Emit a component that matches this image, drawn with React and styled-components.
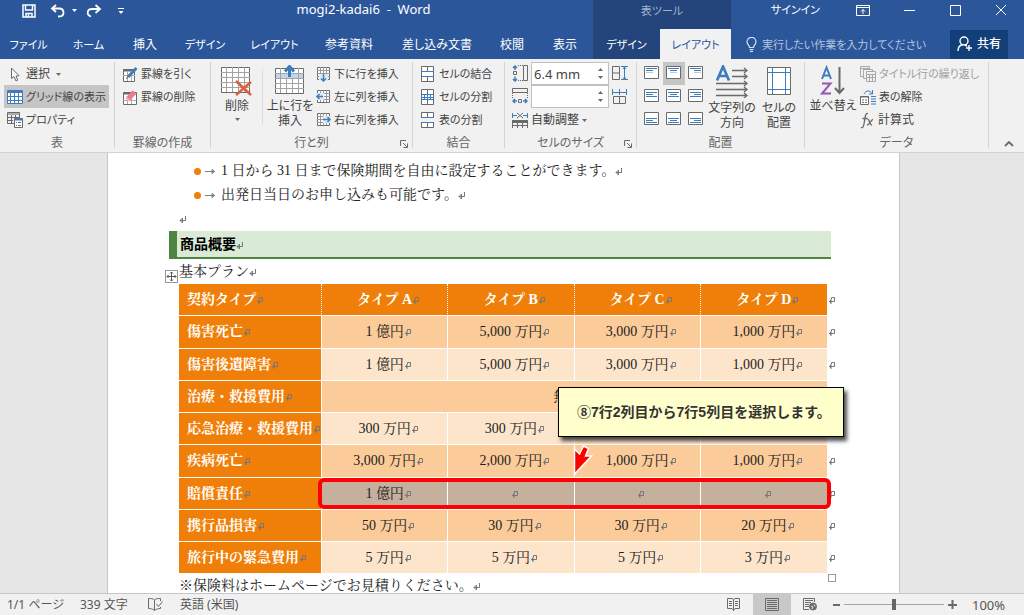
import React from "react";
import styled, { createGlobalStyle, css } from "styled-components";

const BLUE = "#2b579a";
const NAVY = "#23457c";
const INK = "#444444";
const LINE = "#3f7cbb";
const GREY = "#6a6a6a";

const Global = createGlobalStyle`
  * { box-sizing: border-box; }
  body { margin: 0; background: #e6e6e6; }
  body, button, input {
    font-family: "Noto Sans", "Noto Sans CJK JP", sans-serif;
    font-size: 12px;
    line-height: 16px;
    font-feature-settings: "palt";
  }
  button { border: 0; padding: 0; background: none; color: inherit; white-space: nowrap; }
  svg { display: block; flex: none; }
`;

const Shell = styled.div`
  display: flex;
  flex-direction: column;
  height: 100vh;
  overflow: hidden;
  color: ${INK};
`;

/* ---------- header ---------- */
const Header = styled.header`
  display: grid;
  grid-template-columns: 593px 138px 1fr;
  grid-template-rows: 29px 30px;
  flex: none;
  background: ${BLUE};
  color: #fff;
`;
const TitleLeft = styled.div`
  display: flex;
  align-items: center;
  padding: 0 0 8px 22px;
`;
const QuickTools = styled.div`
  display: flex;
  align-items: center;
  gap: 6px;
  width: 104px;
`;
const DocTitle = styled.h1`
  flex: 1;
  margin: 0;
  padding: 0 0 4px 8px;
  font-size: 13px;
  font-weight: 400;
  text-align: center;
  white-space: pre;
`;
const ToolsLabel = styled.div`
  display: flex;
  align-items: center;
  justify-content: center;
  padding-bottom: 8px;
  background: ${NAVY};
  color: #a2b4d0;
  font-size: 11px;
`;
const TitleRight = styled.div`
  display: flex;
  align-items: center;
  justify-content: flex-end;
  padding: 0 17px 9px 0;
`;
const SignIn = styled.button`
  font-size: 11px;
`;
const WindowButton = styled.button`
  display: flex;
  justify-content: center;
  width: ${(p) => p.$w || 46}px;
  margin-left: ${(p) => p.$gap || 0}px;
`;
const TabRow = styled.nav`
  display: flex;
  background: ${(p) => (p.$dark ? NAVY : "transparent")};
`;
const Tab = styled.button`
  width: ${(p) => p.$w}px;
  height: 30px;
  padding-top: 2px;
  font-size: ${(p) => (p.$kana ? 11 : 12)}px;
  ${(p) => p.$active && css`background: #f1f1f1; color: ${BLUE};`}
`;
const TellRow = styled.div`
  display: flex;
  align-items: center;
  padding: 0 16px 0 15px;
`;
const TellMe = styled.label`
  display: flex;
  align-items: center;
  gap: 5px;
  flex: 1;
  input {
    flex: 1;
    min-width: 0;
    height: 20px;
    border: 0;
    padding: 0;
    background: none;
    font-size: 11px;
    outline: none;
  }
  input::placeholder { color: #b4c4df; opacity: 1; }
`;
const Share = styled.button`
  display: flex;
  align-items: center;
  justify-content: center;
  gap: 4px;
  width: 58px;
  height: 29px;
  background: #123f78;
  font-weight: 500;
`;

/* ---------- ribbon ---------- */
const Ribbon = styled.div`
  display: flex;
  flex: none;
  height: 94px;
  padding-top: 3px;
  background: #f1f1f1;
  border-bottom: 1px solid #d2d2d2;
`;
const GroupBox = styled.section`
  position: relative;
  display: flex;
  flex-direction: column;
  width: ${(p) => p.$w}px;
  flex: none;
  margin-bottom: 4px;
  border-right: 1px solid #d4d4d4;
`;
const GroupBody = styled.div`
  display: flex;
  flex: none;
  height: 69px;
  padding-left: ${(p) => p.$pad}px;
`;
const GroupLabel = styled.h2`
  flex: none;
  margin: 4px 0 0;
  font-size: 12px;
  font-weight: 400;
  color: #666;
  text-align: center;
`;
const Launcher = styled.button`
  position: absolute;
  right: 4px;
  bottom: 0;
`;
const Stack = styled.div`
  display: flex;
  flex-direction: column;
  margin-left: ${(p) => p.$ml || 0}px;
`;
const SmallButton = styled.button`
  display: flex;
  align-items: center;
  gap: ${(p) => p.$gap || 4}px;
  height: 23px;
  padding: 1px ${(p) => p.$px || 0}px 0;
  font-size: ${(p) => (p.$kana ? 11 : 12)}px;
  background: ${(p) => (p.$on ? "#c5c5c5" : "transparent")};
  color: ${(p) => (p.disabled ? "#a0a0a0" : INK)};
`;
const BigButton = styled.button`
  display: flex;
  flex-direction: column;
  align-items: center;
  width: ${(p) => p.$w}px;
  height: 69px;
  padding-top: 3px;
  line-height: 15px;
  color: ${INK};
  span { margin: 2px 0 5px; }
`;
const Divider = styled.div`
  width: 1px;
  height: 55px;
  margin: 7px 8px 0 7px;
  background: #dcdcdc;
`;
const SizeRow = styled.div`
  display: flex;
  align-items: center;
  gap: 3px;
  height: 23px;
`;
const SpinField = styled.div`
  display: flex;
  width: 78px;
  height: 23px;
  background: #fff;
  border: 1px solid #c0c0c0;
  input {
    width: 60px;
    border: 0;
    padding: 0 2px;
    background: none;
    font-size: 13px;
    color: ${INK};
    outline: none;
  }
`;
const Steppers = styled.div`
  display: flex;
  flex-direction: column;
  justify-content: space-evenly;
  width: 16px;
  button { display: flex; justify-content: center; }
`;
const AlignGrid = styled.div`
  display: grid;
  grid-template-columns: repeat(3, 22px);
  grid-auto-rows: 23px;
`;
const AlignButton = styled.button`
  display: flex;
  align-items: flex-start;
  justify-content: center;
  padding: 4px 1px 0 0;
  background: ${(p) => (p.$on ? "#c5c5c5" : "transparent")};
`;
const RibbonEnd = styled.div`
  display: flex;
  flex: 1;
  align-items: flex-end;
  justify-content: flex-end;
  padding: 0 10px 5px 0;
`;

/* ---------- document ---------- */
const Canvas = styled.main`
  flex: 1;
  min-height: 0;
  padding-right: 17px;
  overflow: hidden;
`;
const Page = styled.article`
  position: relative;
  width: 793px;
  min-height: 100%;
  margin: 0 auto;
  padding: 6px 68px 0 71px;
  background: #fff;
  border: solid #c6c6c6;
  border-width: 0 1px;
  font-family: "Liberation Serif", "Noto Serif CJK JP", "Noto Sans CJK JP", serif;
  font-size: 14px;
  line-height: 24px;
  font-feature-settings: normal;
  color: #222;
`;
const Bullets = styled.ul`
  margin: 0;
  padding: 0 0 0 15px;
  list-style: none;
`;
const Bullet = styled.li`
  display: flex;
  align-items: center;
  height: 24px;
  white-space: nowrap;
  &::before {
    content: "";
    width: 7px;
    height: 7px;
    margin-right: 4px;
    border-radius: 50%;
    background: #f07f09;
  }
  span { padding-left: 6px; }
`;
const Para = styled.p`
  margin: 0;
  height: 24px;
  white-space: nowrap;
`;
const Heading = styled.h3`
  margin: 0 0 1px -10px;
  height: 28px;
  padding-left: 3px;
  background: #d9ead5;
  border-left: 8px solid #4e8542;
  border-bottom: 2px solid #4e8542;
  font-family: "Liberation Sans", "Noto Sans CJK JP", sans-serif;
  font-size: 14px;
  line-height: 27px;
  color: #000;
`;
const TableArea = styled.div`
  position: relative;
  width: 660px;
`;
const PlanTable = styled.table`
  width: 660px;
  table-layout: fixed;
  border-collapse: separate;
  border-spacing: 0;
  td, th {
    height: 32px;
    padding: 0;
    border-bottom: 1px solid #fff;
    line-height: 24px;
    text-align: center;
    white-space: nowrap;
  }
  tbody tr:nth-child(4n + 1) > * { height: 33px; }
  tr > td:last-child { padding-left: 1px; text-align: left; }
`;
const HeadCell = styled.th`
  background: #f07f09;
  color: #fff;
  border-right: ${(p) => (p.$last ? "0" : "1px dotted #fff")};
`;
const RowHead = styled.th`
  && { padding-left: 8px; text-align: left; }
  background: #f07f09;
  color: #fff;
  border-right: ${(p) => (p.$dotted ? "1px dotted #fff" : "1px solid #fff")};
`;
const Cell = styled.td`
  background: ${(p) => (p.$picked ? "#c4b09c" : p.$odd ? "#fbcb99" : "#fde5cc")};
  border-right: ${(p) => (p.$last ? "0" : "1px solid #fff")};
`;
const MarkSvg = styled.svg`
  display: inline-block;
  margin: 0 -8px 0 0;
  vertical-align: -1px;
`;
const MoveHandle = styled.button`
  position: absolute;
  left: -14px;
  top: -14px;
  display: flex;
  align-items: center;
  justify-content: center;
  width: 13px;
  height: 13px;
  background: #fff;
  border: 1px solid #999;
`;
const ResizeHandle = styled.div`
  position: absolute;
  left: 649px;
  bottom: -8px;
  width: 8px;
  height: 8px;
  border: 1px solid #999;
`;
const RedFrame = styled.div`
  position: absolute;
  left: 139px;
  top: 194px;
  width: 513px;
  height: 31px;
  border: 4px solid #fe0000;
  border-radius: 6px;
`;
const Callout = styled.div`
  position: absolute;
  left: 379px;
  top: 103px;
  display: flex;
  align-items: center;
  width: 286px;
  height: 50px;
  padding-left: 18px;
  background: #ffffcc;
  border: 1px solid #000;
  box-shadow: 3px 4px 4px rgba(0, 0, 0, 0.7);
  font-family: "Liberation Sans", "Noto Sans CJK JP", sans-serif;
  font-size: 14px;
  font-weight: 700;
  white-space: nowrap;
  color: #333;
`;
const Pointer = styled.svg`
  position: absolute;
  left: 394px;
  top: 161px;
`;

/* ---------- status bar ---------- */
const Status = styled.footer`
  display: flex;
  align-items: center;
  flex: none;
  height: 22px;
  padding: 0 18px 0 7px;
  background: #f1f1f1;
  border-top: 1px solid #c6c6c6;
  color: #555;
`;
const StatusItem = styled.button`
  text-align: left;
  width: ${(p) => p.$w}px;
`;
const Views = styled.div`
  display: flex;
  margin: 0 4px 0 auto;
`;
const ViewButton = styled.button`
  display: flex;
  align-items: center;
  justify-content: center;
  width: 38px;
  height: 21px;
  background: ${(p) => (p.$on ? "#c8c8c8" : "transparent")};
`;
const Zoom = styled.input`
  appearance: none;
  width: 100px;
  height: 12px;
  margin: 0 4px;
  background: linear-gradient(#a6a6a6, #a6a6a6) center / 100% 1px no-repeat;
  &::-webkit-slider-thumb {
    appearance: none;
    width: 4px;
    height: 11px;
    background: #666;
  }
`;
const ZoomValue = styled.output`
  width: 34px;
  margin-left: 15px;
  font-size: 13px;
`;

/* ---------- icons ---------- */
const Svg = ({ w = 16, h = 16, sw = 1, c = GREY, children }) => (
  <svg width={w} height={h} viewBox={`0 0 ${w} ${h}`} fill="none" stroke={c} strokeWidth={sw} aria-hidden="true">
    {children}
  </svg>
);
const Caret = ({ c = GREY }) => (
  <Svg w={5} h={3}><path d="M0 0h5L2.500 3z" fill={c} stroke="none" /></Svg>
);
const SaveIcon = () => (
  <Svg w={14} h={14} c="#fff" sw={1.5}><path d="M1 1h12v12H1zM3.500 1v5h7V1M4 13V9.500h6V13M6.500 10.500v2" /></Svg>
);
const UndoIcon = () => (
  <Svg w={16} h={14} c="#fff" sw={1.8}><path d="M6 1L2 4.500L6 8M2.500 4.500H9c6 0 6 8 0 8H8" /></Svg>
);
const RedoIcon = () => (
  <Svg w={16} h={14} c="#fff" sw={1.8}><path d="M9.500 1l4.500 4l-4.500 4M13.500 5H6C1 5 0 11 5 12.500" /></Svg>
);
const MoreIcon = () => (
  <Svg w={6} h={6} c="#fff"><path d="M0 .5h6" /><path d="M.5 3h5L3 6z" fill="#fff" stroke="none" /></Svg>
);
const BulbIcon = () => (
  <Svg w={11} h={15} c="#d5dff0" sw={1.2}><path d="M3.500 10.500C3.500 8 1 7.500 1 4.800a4.300 4.300 0 0 1 9 0c0 2.700-2.500 3.200-2.500 5.700zM3.500 12.500h4M4 14.400h3" /></Svg>
);
const PersonIcon = () => (
  <Svg w={16} h={16} c="#fff" sw={1.4}><circle cx="7" cy="5" r="4" /><path d="M1 15c0-4 2-6 5-6.500M8 9l2 1M12 9v6M9 12h6" /></Svg>
);
const CursorIcon = () => (
  <Svg w={10} h={15}><path d="M1.500 1v10.500l2.500-2l2 4.500l1.700-.8L6 9l3-.3z" fill="#fff" /></Svg>
);
const GridlinesIcon = () => (
  <Svg w={16} h={14} c={LINE}><path d="M.5.500h15v13H.5z" fill="#fff" /><path d="M0 2h16" strokeWidth="2" /><path d="M3.500 0v14M7.500 3v11M11.500 3v11M0 6.500h16M0 10.500h16" /></Svg>
);
const PropertiesIcon = () => (
  <Svg w={16} h={16}><path d="M.5.500h12v11H.5zM0 2h13M4.500 3v9M8.500 3v3M0 5.500h12M0 8.500h6" /><path d="M7.500 6.500h8v9h-8z" fill="#fff" /><path d="M7 7.500h9" stroke={LINE} strokeWidth="2" /><path d="M9 10.500h1M11 10.500h3M9 13.500h1M11 13.500h3" /></Svg>
);
const DrawIcon = () => (
  <Svg w={16} h={15}><path d="M1.500 2.500h11v12h-11z" fill="#fff" /><path d="M1 3.500h12" strokeWidth="2" /><path d="M5.500 4v10M9.500 5v9M1 8.500h12" stroke="#aaa" /><path d="M6 10L14.500 1" stroke={LINE} strokeWidth="3" /><path d="M4.500 12l1-2.500" /></Svg>
);
const EraseIcon = () => (
  <Svg w={16} h={15}><path d="M1.500 2.500h13v12h-13z" fill="#fff" /><path d="M1 3.500h8" strokeWidth="2" /><path d="M5.500 10v4M9.500 9v5M1 10.500h13" stroke="#aaa" /><path d="M6 9L12.500 2" stroke="#ea7d8c" strokeWidth="5" /><path d="M4 8l4 3" stroke="#f5b5bd" strokeWidth="2" /></Svg>
);
const DeleteIcon = () => (
  <Svg w={32} h={31}><path d="M.5 2.500h28v25H.5z" fill="#fff" /><path d="M0 7.500h29M0 12.500h29M0 17.500h29M0 22.500h29M5.500 2v25M11.500 2v25M17.500 2v25M23.500 2v25" stroke="#a3a3a3" /><path d="M15 16L30 30M30 17L15 30" stroke="#d9603f" strokeWidth="2.500" /></Svg>
);
const InsertAboveIcon = () => (
  <Svg w={30} h={31}><path d="M.5 3.500h28v25H.5z" fill="#fff" /><path d="M1 8h27v5H1z" fill="#c3d5e8" stroke="none" /><path d="M0 8.500h29M0 13.500h29M0 18.500h29M0 23.500h29M5.500 3v25M11.500 13v15M17.500 13v15M23.500 3v25" stroke="#a3a3a3" /><path d="M14.500 12V3M10 6.500l4.500-5l4.500 5" stroke={LINE} strokeWidth="3" /></Svg>
);
const InsertIcon = ({ dir }) => (
  <Svg w={15} h={15}>
    <path d="M1.500.500h12v12h-12z" fill="#fff" />
    <path d="M4.500 0v12M7.500 0v12M10.500 0v12M1 3.500h13M1 6.500h13M1 9.500h13" stroke="#999" />
    {dir === "down" && <g><path d="M3 7h9v7H3z" fill="#dfe8f2" stroke="none" /><path d="M7.500 7v7M5 11.500L7.500 14L10 11.500" stroke={LINE} strokeWidth="1.500" /></g>}
    {dir === "left" && <g><path d="M0 3h8v7H0z" fill="#dfe8f2" stroke="none" /><path d="M7 6.500H1M3.500 4L1 6.500L3.500 9" stroke={LINE} strokeWidth="1.500" /></g>}
    {dir === "right" && <g><path d="M7 3h8v7H7z" fill="#dfe8f2" stroke="none" /><path d="M7 6.500h7M11.500 4L14 6.500L11.500 9" stroke={LINE} strokeWidth="1.500" /></g>}
  </Svg>
);
const MergeIcon = () => (
  <Svg w={14} h={16}><path d="M.5.500h12v15H.500zM6.500 0v5M6.500 11v5" fill="#fff" /><path d="M0 5.500h13M0 10.500h13" stroke={LINE} /></Svg>
);
const SplitCellsIcon = () => (
  <Svg w={14} h={16}><path d="M.5.500h12v15H.500zM6.500 0v5M6.500 11v5" fill="#fff" /><path d="M0 5.500h13M0 10.500h13M3.500 5v6M6.500 5v6M9.500 5v6M0 8.500h13" stroke={LINE} /></Svg>
);
const SplitTableIcon = () => (
  <Svg w={14} h={16}><path d="M.5 5V.500h12V5M6.500 0v5M.5 11v4.500h12V11M6.500 11v5" fill="#fff" /><path d="M0 5.500h13M0 10.500h13" stroke={LINE} /></Svg>
);
const HeightIcon = () => (
  <Svg w={16} h={17}><path d="M11.500.500h4v15h-4zM1.500 6.500h3v3h-3z" /><path d="M6 .5h5M6 15.500h5" strokeDasharray="1 1" /><path d="M3 5V1M1 3l2-2l2 2M3 11.500v4M1 14l2 2l2-2" stroke={LINE} strokeWidth="1.500" /></Svg>
);
const WidthIcon = () => (
  <Svg w={16} h={17}><path d="M.5.500h15v4H.500zM6.500 11.500h3v3h-3z" /><path d="M.5 5v6M15.500 5v6" strokeDasharray="1 1" /><path d="M5 13H1M3 11l-2 2l2 2M11 13h4M13 11l2 2l-2 2" stroke={LINE} strokeWidth="1.500" /></Svg>
);
const AutoFitIcon = () => (
  <Svg w={16} h={16}><path d="M5 1l6 5M11 1L5 6" /><path d="M.5 1v5M15.500 1v5M1 3.500h4M11 3.500h4" stroke={LINE} /><path d="M0 9.500h16" strokeWidth="3" /><path d="M.5 9v7M5.500 9v7M10.500 9v7M15.500 9v7M0 13.500h16" /></Svg>
);
const EqualRowsIcon = () => (
  <Svg w={16} h={15}><path d="M.5.500h7v13h-7zM0 7h8" /><path d="M9 .5h7M9 13.500h7M12.500 1v13M11 3l1.500-2L14 3M11 11.500l1.500 2l1.500-2" stroke={LINE} /></Svg>
);
const EqualColsIcon = () => (
  <Svg w={15} h={16}><path d="M1.500 7.500h12v7h-12zM7.500 8v7" /><path d="M.5 0v6M7.500 0v6M14.500 0v6M0 3.500h15" stroke={LINE} /></Svg>
);
const AlignIcon = ({ row, col }) => {
  const y = [2.5, 3.5, 6.5][row];
  const x = (len) => [2, 7 - len / 2 + 0.5, 13 - len][col];
  return (
    <Svg w={15} h={13}>
      <path d="M.5.500h14v12H.500z" fill="#fff" />
      <g stroke={LINE}>
        <path d={`M${x(11)} ${y}h11`} />
        <path d={`M${x(7)} ${y + 2}h7`} />
        <path d={row === 0 ? `M${x(7)} ${y + 4}h7` : `M${x(11)} ${y + 4}h11`} opacity={row === 0 ? 0.4 : 1} />
      </g>
    </Svg>
  );
};
const DirectionIcon = () => (
  <Svg w={33} h={33}><path d="M1 15.500L7 1.500L13 15.500M3.500 11h7" stroke={LINE} strokeWidth="2.700" /><path d="M16 5.500h15M16 11.500h15M0 18.500h31M0 24.500h31M0 30.500h31M28 3l3 2.500L28 8M28 9l3 2.500L28 14M28 16l3 2.500L28 21M28 22l3 2.500L28 27M28 28l3 2.500L28 33" strokeWidth="1.300" /></Svg>
);
const MarginsIcon = () => (
  <Svg w={24} h={33}><path d="M.5 2.500h23v27H.500z" fill="#fff" /><path d="M5.500 3v26M18.500 3v26M1 7.500h22M1 24.500h22" stroke={LINE} /></Svg>
);
const SortIcon = () => (
  <Svg w={26} h={31}><path d="M2 14L6.500 2.500L11 14M3.500 10.500h6" stroke={LINE} strokeWidth="2" /><path d="M2 18.500h8.500L2 28.500h9" stroke="#9558b2" strokeWidth="2" /><path d="M19.500 2v26M15 23l4.500 5l4.500-5" strokeWidth="2" /></Svg>
);
const RepeatIcon = () => (
  <Svg w={16} h={16} c="#a8a8a8"><path d="M.5.500h9v10h-9zM0 2.500h9M3.500 3v8" /><path d="M3.500 3.500h9v9h-9z" fill="#f1f1f1" /><path d="M6.500 5.500h9v10h-9zM6 8.500h9M9.500 8v7M12.500 8v7M6 11.500h9" fill="#f1f1f1" /></Svg>
);
const ConvertIcon = () => (
  <Svg w={16} h={15}><path d="M.5 6.500h8v8h-8zM0 7h9" fill="#fff" /><path d="M2 10h2M5 10h2M2 12.500h2M5 12.500h2" /><path d="M4 4C6 0 10 0 12 3.500M12.500 0v4H9M11 6.500h5M11 9h5M11 11.500h5M11 14h5" stroke={LINE} /></Svg>
);
const FormulaIcon = () => (
  <Svg w={14} h={17}><path d="M1 15.500c2.500 1 3-3 3.500-6.500S5.500.500 8 1.500M2.500 6.500h5M7.500 7.500c2-1 2 6 4.500 5.500M13 7.500c-2 0-3.500 5.500-6 5.500" strokeWidth="1.300" /></Svg>
);
const LauncherIcon = () => (
  <Svg w={8} h={8}><path d="M.5 6V.500H6M3 3l4 4M7.500 3.500v4h-4" /></Svg>
);
const ArrowMark = () => (
  <Svg w={10} h={6} c="#7f7f7f"><path d="M0 3.500h9M7 1.500l2.500 2L7 5.500z" fill="#7f7f7f" /></Svg>
);
const ReturnMark = () => (
  <MarkSvg width="8" height="8" viewBox="0 0 8 8" fill="none" stroke="#777" aria-hidden="true">
    <path d="M6.500 0v4.500H1M3.500 2v5L1 4.500z" fill="none" />
  </MarkSvg>
);
const CellMark = () => (
  <MarkSvg width="8" height="8" viewBox="0 0 8 8" fill="none" stroke="#777" aria-hidden="true">
    <path d="M3.500 2V.500h3v4H1M2.500 3v3M3 2v5M1.500 4v1" />
  </MarkSvg>
);

/* ---------- pieces ---------- */
const Group = ({ w, label, pad, launcher, children }) => (
  <GroupBox $w={w}>
    <GroupBody $pad={pad}>{children}</GroupBody>
    <GroupLabel>{label}</GroupLabel>
    {launcher && <Launcher aria-label={`${label}の詳細`}><LauncherIcon /></Launcher>}
  </GroupBox>
);
const Spin = ({ label, value }) => (
  <SpinField>
    <input aria-label={label} defaultValue={value} />
    <Steppers>
      <button aria-label={`${label}を増やす`}><Svg w={5} h={3}><path d="M0 3h5L2.500 0z" fill={GREY} stroke="none" /></Svg></button>
      <button aria-label={`${label}を減らす`}><Caret /></button>
    </Steppers>
  </SpinField>
);

const tabs = [
  ["ファイル", 57, 1], ["ホーム", 63, 1], ["挿入", 50], ["デザイン", 70, 1], ["レイアウト", 69, 1],
  ["参考資料", 80], ["差し込み文書", 96], ["校閲", 54], ["表示", 52],
];
const rows = [
  ["傷害死亡", "1 億円", "5,000 万円", "3,000 万円", "1,000 万円"],
  ["傷害後遺障害", "1 億円", "5,000 万円", "3,000 万円", "1,000 万円"],
  ["治療・救援費用", "無制限"],
  ["応急治療・救援費用", "300 万円", "300 万円", "300 万円", "300 万円"],
  ["疾病死亡", "3,000 万円", "2,000 万円", "1,000 万円", "1,000 万円"],
  ["賠償責任", "1 億円", "", "", ""],
  ["携行品損害", "50 万円", "30 万円", "30 万円", "20 万円"],
  ["旅行中の緊急費用", "5 万円", "5 万円", "5 万円", "3 万円"],
];
const SELECTED_ROW = 5;

export default function App() {
  return (
    <Shell>
      <Global />
      <Header>
        <TitleLeft>
          <QuickTools>
            <button aria-label="保存"><SaveIcon /></button>
            <WindowButton aria-label="元に戻す" $w={16} $gap={8}><UndoIcon /></WindowButton>
            <Caret c="#fff" />
            <WindowButton aria-label="やり直し" $w={16} $gap={3}><RedoIcon /></WindowButton>
            <WindowButton aria-label="カスタマイズ" $w={6} $gap={10}><MoreIcon /></WindowButton>
          </QuickTools>
          <DocTitle>{"mogi2-kadai6  -  Word"}</DocTitle>
        </TitleLeft>
        <ToolsLabel>表ツール</ToolsLabel>
        <TitleRight>
          <SignIn>サインイン</SignIn>
          <WindowButton $gap={20} aria-label="リボンの表示オプション">
            <Svg w={14} h={11} c="#fff"><path d="M.5.500h13v10H.500zM0 2.500h14M7 9V4.500M5 6.500L7 4.500L9 6.500" /></Svg>
          </WindowButton>
          <WindowButton aria-label="最小化"><Svg w={11} h={11} c="#fff"><path d="M0 5.500h11" /></Svg></WindowButton>
          <WindowButton aria-label="最大化"><Svg w={11} h={11} c="#fff"><path d="M.5.500h10v10H.500z" /></Svg></WindowButton>
          <WindowButton aria-label="閉じる" $w={12} $gap={17}><Svg w={12} h={12} c="#fff"><path d="M1 1l10 10M11 1L1 11" /></Svg></WindowButton>
        </TitleRight>
        <TabRow>
          {tabs.map(([name, w, kana]) => <Tab key={name} $w={w} $kana={kana}>{name}</Tab>)}
        </TabRow>
        <TabRow $dark>
          <Tab $w={67} $kana>デザイン</Tab>
          <Tab $w={71} $kana $active>レイアウト</Tab>
        </TabRow>
        <TellRow>
          <TellMe><BulbIcon /><input aria-label="操作アシスト" placeholder="実行したい作業を入力してください" /></TellMe>
          <Share><PersonIcon />共有</Share>
        </TellRow>
      </Header>

      <Ribbon>
        <Group w={115} label="表" pad={4}>
          <Stack>
            <SmallButton $px={6} $gap={6}><CursorIcon />選択<Caret /></SmallButton>
            <SmallButton $px={3} $gap={3} $on $kana><GridlinesIcon />グリッド線の表示</SmallButton>
            <SmallButton $px={3} $gap={3} $kana><PropertiesIcon />プロパティ</SmallButton>
          </Stack>
        </Group>
        <Group w={96} label="罫線の作成" pad={7}>
          <Stack>
            <SmallButton $gap={3} $kana><DrawIcon />罫線を引く</SmallButton>
            <SmallButton $gap={3} $kana><EraseIcon />罫線の削除</SmallButton>
          </Stack>
        </Group>
        <Group w={202} label="行と列" pad={8} launcher>
          <BigButton $w={36}><DeleteIcon /><span>削除</span><Caret /></BigButton>
          <Divider />
          <BigButton $w={38}><InsertAboveIcon /><span>上に行を<br />挿入</span></BigButton>
          <Stack $ml={7}>
            <SmallButton $gap={3} $kana><InsertIcon dir="down" />下に行を挿入</SmallButton>
            <SmallButton $gap={3} $kana><InsertIcon dir="left" />左に列を挿入</SmallButton>
            <SmallButton $gap={3} $kana><InsertIcon dir="right" />右に列を挿入</SmallButton>
          </Stack>
        </Group>
        <Group w={92} label="結合" pad={8}>
          <Stack>
            <SmallButton $kana><MergeIcon />セルの結合</SmallButton>
            <SmallButton $kana><SplitCellsIcon />セルの分割</SmallButton>
            <SmallButton $kana><SplitTableIcon />表の分割</SmallButton>
          </Stack>
        </Group>
        <Group w={132} label="セルのサイズ" pad={7} launcher>
          <Stack>
            <SizeRow><HeightIcon /><Spin label="高さ" value="6.4 mm" /><button aria-label="高さを揃える"><EqualRowsIcon /></button></SizeRow>
            <SizeRow><WidthIcon /><Spin label="幅" value="" /><button aria-label="幅を揃える"><EqualColsIcon /></button></SizeRow>
            <SmallButton $gap={3}><AutoFitIcon />自動調整<Caret /></SmallButton>
          </Stack>
        </Group>
        <Group w={168} label="配置" pad={4}>
          <AlignGrid>
            {[0, 1, 2].map((r) => [0, 1, 2].map((c) => (
              <AlignButton key={`${r}${c}`} $on={r === 0 && c === 1} aria-label={`配置 ${r + 1}-${c + 1}`}>
                <AlignIcon row={r} col={c} />
              </AlignButton>
            )))}
          </AlignGrid>
          <BigButton $w={50}><DirectionIcon /><span>文字列の<br />方向</span></BigButton>
          <BigButton $w={44}><MarginsIcon /><span>セルの<br />配置</span></BigButton>
        </Group>
        <Group w={184} label="データ" pad={4}>
          <BigButton $w={48}><SortIcon /><span>並べ替え</span></BigButton>
          <Stack $ml={3}>
            <SmallButton $gap={3} $kana disabled><RepeatIcon />タイトル行の繰り返し</SmallButton>
            <SmallButton $gap={3} $kana><ConvertIcon />表の解除</SmallButton>
            <SmallButton $gap={4}><FormulaIcon />計算式</SmallButton>
          </Stack>
        </Group>
        <RibbonEnd>
          <button aria-label="リボンを折りたたむ"><Svg w={10} h={6} sw={1.8}><path d="M1 5l4-4l4 4" /></Svg></button>
        </RibbonEnd>
      </Ribbon>

      <Canvas>
        <Page>
          <Bullets>
            <Bullet><ArrowMark /><span>1 日から 31 日まで保険期間を自由に設定することができます。<ReturnMark /></span></Bullet>
            <Bullet><ArrowMark /><span>出発日当日のお申し込みも可能です。<ReturnMark /></span></Bullet>
          </Bullets>
          <Para><ReturnMark /></Para>
          <Heading>商品概要<ReturnMark /></Heading>
          <Para>基本プラン<ReturnMark /></Para>
          <TableArea>
            <PlanTable>
              <colgroup>
                <col style={{ width: 143 }} />
                <col /><col /><col /><col />
                <col style={{ width: 12 }} />
              </colgroup>
              <thead>
                <tr>
                  <RowHead scope="col" $dotted>契約タイプ<CellMark /></RowHead>
                  {["A", "B", "C", "D"].map((t) => (
                    <HeadCell key={t} scope="col" $last={t === "D"}>タイプ {t}<CellMark /></HeadCell>
                  ))}
                  <td><CellMark /></td>
                </tr>
              </thead>
              <tbody>
                {rows.map(([name, ...vals], i) => (
                  <tr key={name}>
                    <RowHead scope="row">{name}<CellMark /></RowHead>
                    {vals.map((v, j) => (
                      <Cell
                        key={j}
                        colSpan={vals.length === 1 ? 4 : 1}
                        $odd={i % 2 === 0}
                        $picked={i === SELECTED_ROW}
                        $last={j === vals.length - 1}
                      >
                        {v}<CellMark />
                      </Cell>
                    ))}
                    <td><CellMark /></td>
                  </tr>
                ))}
              </tbody>
            </PlanTable>
            <MoveHandle aria-label="表の移動">
              <Svg w={11} h={11} c="#555"><path d="M5.500 1v9M1 5.500h9M4 2.500L5.500 1L7 2.500M4 8.500L5.500 10L7 8.500M2.500 4L1 5.500L2.500 7M8.500 4L10 5.500L8.500 7" /></Svg>
            </MoveHandle>
            <ResizeHandle />
            <RedFrame />
            <Callout>⑧7行2列目から7行5列目を選択します。</Callout>
            <Pointer width="21" height="32" viewBox="0 0 21 32" aria-hidden="true">
              <path d="M1.500 29V4l5 5l4-8l5 2.500l-3 7.500h6z" fill="#fe0000" stroke="#fff" strokeWidth="1.500" />
            </Pointer>
          </TableArea>
          <Para>※保険料はホームページでお見積りください。<ReturnMark /></Para>
        </Page>
      </Canvas>

      <Status>
        <StatusItem $w={73}>1/1 ページ</StatusItem>
        <StatusItem $w={68}>339 文字</StatusItem>
        <StatusItem $w={32} aria-label="校正">
          <Svg w={15} h={13}><path d="M6.500 2v10.500M6.500 2C5 .5 3 .5.500.500v10c2.500 0 4.500.500 6 2M6.500 2C8 .5 10 .5 12.500.500V3M6.500 12.500c1.500-1.500 4-2 6-2V9M8.500 6l2 2.500l4-5" /></Svg>
        </StatusItem>
        <StatusItem $w={80}>英語 (米国)</StatusItem>
        <Views>
          <ViewButton aria-label="閲覧モード">
            <Svg w={14} h={13}><path d="M6.500 1.500v11M6.500 1.500L5 .5H.500v10H5l1.500 2l1.500-2h4.500V.500H8zM2 3.500h3M2 5.500h3M2 7.500h3M8 3.500h3M8 5.500h3M8 7.500h3" /></Svg>
          </ViewButton>
          <ViewButton $on aria-label="印刷レイアウト">
            <Svg w={14} h={13}><path d="M.5.500h13v12H.500zM2 2.500h10M2 4.500h10M2 6.500h10M2 8.500h10M2 10.500h10" /></Svg>
          </ViewButton>
          <ViewButton aria-label="Webレイアウト">
            <Svg w={14} h={13}><path d="M11.500 4V.500H.500v11H6M2 2.500h8M2 4.500h6M2 6.500h4M2 8.500h4" /><circle cx="10" cy="8.500" r="3.500" fill={GREY} /><path d="M8 8l2 1l-1 2M11 6.500l1 2" stroke="#f1f1f1" /></Svg>
          </ViewButton>
        </Views>
        <button aria-label="縮小"><Svg w={7} h={9} sw={2}><path d="M0 5h7" /></Svg></button>
        <Zoom type="range" min="0" max="200" defaultValue="100" aria-label="ズーム" />
        <button aria-label="拡大"><Svg w={9} h={9} sw={2}><path d="M0 5h9M4.500 0v9" /></Svg></button>
        <ZoomValue>100%</ZoomValue>
      </Status>
    </Shell>
  );
}
